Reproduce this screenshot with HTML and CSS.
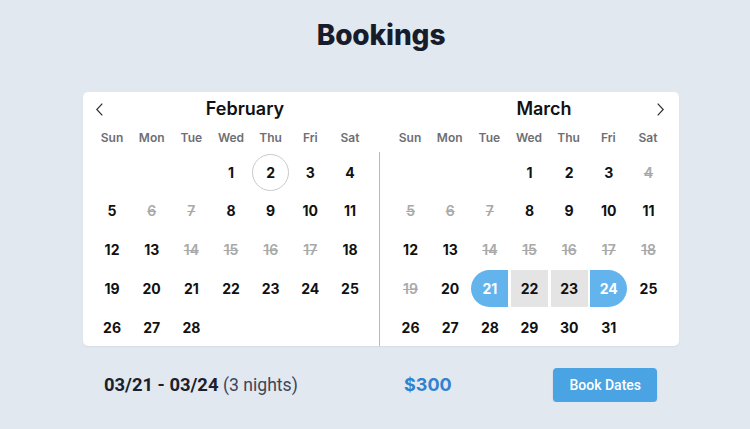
FILE: index.html
```html
<!DOCTYPE html>
<html lang="en">
<head>
<meta charset="utf-8">
<title>Bookings</title>
<link rel="stylesheet" href="styles.css">
</head>
<body>
<div class="page">
  <h1 class="title">Bookings</h1>
  <div class="card">
    <section class="month month--prev">
      <div class="month-head">
        <button class="nav nav--prev" aria-label="Previous month">
          <svg width="7" height="13" viewBox="0 0 7 13"><path d="M6.3 0.6 L0.8 6.5 L6.3 12.4" fill="none" stroke="#2d2d2d" stroke-width="1.2"/></svg>
        </button>
        <div class="month-name month-name--prev">February</div>
        <span></span>
      </div>
      <div class="weekdays">
        <span>Sun</span><span>Mon</span><span>Tue</span><span>Wed</span><span>Thu</span><span>Fri</span><span>Sat</span>
      </div>
      <div class="days">
        <span></span><span></span><span></span>
        <span class="day">1</span><span class="day day--today">2</span><span class="day">3</span><span class="day">4</span>
        <span class="day">5</span><span class="day day--off">6</span><span class="day day--off">7</span><span class="day">8</span><span class="day">9</span><span class="day">10</span><span class="day">11</span>
        <span class="day">12</span><span class="day">13</span><span class="day day--off">14</span><span class="day day--off">15</span><span class="day day--off">16</span><span class="day day--off">17</span><span class="day">18</span>
        <span class="day">19</span><span class="day">20</span><span class="day">21</span><span class="day">22</span><span class="day">23</span><span class="day">24</span><span class="day">25</span>
        <span class="day">26</span><span class="day">27</span><span class="day">28</span>
      </div>
    </section>
    <section class="month month--next">
      <div class="month-head">
        <span></span>
        <div class="month-name month-name--next">March</div>
        <button class="nav nav--next" aria-label="Next month">
          <svg width="7" height="13" viewBox="0 0 7 13"><path d="M0.7 0.6 L6.2 6.5 L0.7 12.4" fill="none" stroke="#2d2d2d" stroke-width="1.2"/></svg>
        </button>
      </div>
      <div class="weekdays">
        <span>Sun</span><span>Mon</span><span>Tue</span><span>Wed</span><span>Thu</span><span>Fri</span><span>Sat</span>
      </div>
      <div class="days days--divided">
        <span></span><span></span><span></span>
        <span class="day">1</span><span class="day">2</span><span class="day">3</span><span class="day day--off">4</span>
        <span class="day day--off">5</span><span class="day day--off">6</span><span class="day day--off">7</span><span class="day">8</span><span class="day">9</span><span class="day">10</span><span class="day">11</span>
        <span class="day">12</span><span class="day">13</span><span class="day day--off">14</span><span class="day day--off">15</span><span class="day day--off">16</span><span class="day day--off">17</span><span class="day day--off">18</span>
        <span class="day day--off">19</span><span class="day">20</span><span class="day day--start">21</span><span class="day day--range">22</span><span class="day day--range">23</span><span class="day day--end">24</span><span class="day">25</span>
        <span class="day">26</span><span class="day">27</span><span class="day">28</span><span class="day">29</span><span class="day">30</span><span class="day">31</span>
      </div>
    </section>
  </div>
  <div class="footer">
    <div class="summary"><strong>03/21 - 03/24</strong> <span class="nights">(3 nights)</span></div>
    <div class="price">$300</div>
    <button class="book">Book Dates</button>
  </div>
</div>
</body>
</html>
```

FILE: styles.css
```css
* { box-sizing: border-box; }

html, body {
  margin: 0;
  padding: 0;
  background: #e2e8f0;
}

body {
  font-family: Inter, "Noto Sans", sans-serif;
  color: #1a202c;
}

.page {
  width: 596px;
  margin-left: 83px;
  padding-top: 17px;
}

.title {
  margin: 0;
  font-size: 28px;
  line-height: 36px;
  font-weight: 800;
  text-align: center;
  color: #171c2b;
  letter-spacing: -0.1px;
}

.card {
  margin-top: 39px;
  display: flex;
  background: #ffffff;
  border-radius: 5px;
  box-shadow: 0 1px 2px rgba(0, 0, 0, 0.06);
  overflow: hidden;
}

.month--prev { width: 296px; }
.month--next { width: 300px; }

.month-head {
  display: grid;
  grid-template-columns: 24px 1fr 24px;
  align-items: center;
  height: 24px;
  margin-top: 5px;
  padding: 0 6px;
}

.month-name {
  text-align: center;
  font-size: 18px;
  font-weight: 600;
  color: #111111;
  line-height: 24px;
}

.month-name--prev { padding-left: 28px; }
.month-name--next { padding-left: 30px; }

.nav {
  display: flex;
  align-items: center;
  border: 0;
  background: none;
  padding: 0;
  height: 24px;
  cursor: pointer;
}

.nav--prev { justify-self: start; margin-left: 7px; }
.nav--next { justify-self: end; margin-right: 9px; }

.weekdays {
  display: grid;
  grid-template-columns: repeat(7, 37px);
  column-gap: 2.67px;
  justify-content: center;
  margin-top: 9px;
  margin-bottom: 6px;
  font-size: 12px;
  font-weight: 600;
  line-height: 16px;
  color: #6e6e73;
  text-align: center;
}

.days {
  display: grid;
  grid-template-columns: repeat(7, 37px);
  grid-auto-rows: 37px;
  column-gap: 2.67px;
  row-gap: 1.75px;
  justify-content: center;
  padding-top: 1.5px;
}

.days--divided {
  border-left: 1px solid #b9b9b9;
}

.day {
  display: flex;
  align-items: center;
  justify-content: center;
  font-size: 14px;
  font-weight: 700;
  color: #111111;
}

.day--today {
  border: 1px solid #c9c9c9;
  border-radius: 50%;
}

.day--off {
  color: #a9a9a9;
  text-decoration: line-through;
  font-weight: 600;
}

.day--range {
  background: #e4e4e4;
}

.day--start,
.day--end {
  background: #63b3ed;
  color: #ffffff;
}

.day--start { border-radius: 18.5px 0 0 18.5px; }
.day--end { border-radius: 0 18.5px 18.5px 0; }

.footer {
  display: flex;
  align-items: center;
  margin-top: 22px;
  padding: 0 22px 0 21px;
  font-family: Roboto, "Liberation Sans", sans-serif;
}

.summary {
  width: 300px;
  font-size: 18.4px;
  color: #1a202c;
}

.summary strong { font-weight: 700; }

.nights {
  font-size: 17.6px;
  font-weight: 400;
  color: #3d4656;
}

.price {
  font-family: Inter, "Noto Sans", sans-serif;
  font-size: 18px;
  font-weight: 700;
  color: #3182ce;
}

.book {
  margin-left: auto;
  height: 34px;
  padding: 0 16px;
  border: 0;
  border-radius: 4px;
  background: #4aa3e3;
  color: #ffffff;
  font-family: Roboto, "Liberation Sans", sans-serif;
  font-size: 14px;
  font-weight: 500;
  box-shadow: 0 1px 2px rgba(0, 0, 0, 0.12);
  cursor: pointer;
}
```
